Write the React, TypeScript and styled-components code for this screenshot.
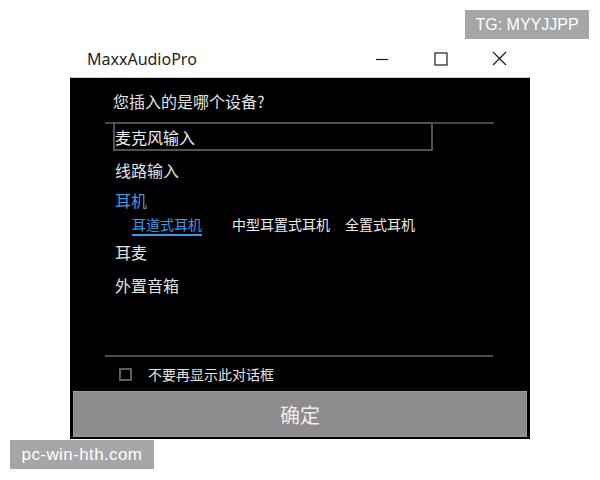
import React, { useState } from "react";
import styled, { createGlobalStyle } from "styled-components";

const GlobalStyle = createGlobalStyle`
  html, body {
    margin: 0;
    padding: 0;
    background: #ffffff;
  }
  body {
    font-family: "Noto Sans", "Noto Sans CJK SC", sans-serif;
  }
`;

const CJK = `"Noto Sans CJK SC", "Noto Sans", sans-serif`;

const Page = styled.div`
  position: relative;
  width: 600px;
  height: 480px;
  overflow: hidden;
  background: #ffffff;
`;

const Window = styled.div`
  margin: 40px 0 0 70px;
  width: 460px;
  display: flex;
  flex-direction: column;
`;

const TitleBar = styled.div`
  height: 37px;
  display: flex;
  align-items: center;
  background: #ffffff;
  border-bottom: 1px solid #c8c8c8;
`;

const Title = styled.div`
  flex: 1;
  padding-left: 17px;
  font-family: "Noto Sans", sans-serif;
  font-size: 16px;
  color: #1e1e1e;
  line-height: 1;
  padding-top: 1px;
`;

const Controls = styled.div`
  display: flex;
  height: 100%;
  margin-right: 1px;
`;

const ControlButton = styled.button`
  width: 59px;
  height: 100%;
  border: 0;
  padding: 0;
  background: transparent;
  display: flex;
  align-items: center;
  justify-content: center;
  color: #1e1e1e;
  cursor: default;
`;

const Panel = styled.div`
  height: 361px;
  background: #000000;
  display: flex;
  flex-direction: column;
  padding: 0 3px 2px 3px;
  box-sizing: border-box;
  color: #e4e4e4;
  font-family: ${CJK};
`;

const Question = styled.div`
  height: 44px;
  display: flex;
  align-items: center;
  padding-left: 40px;
  font-size: 16px;
  color: #e2e2e2;
  padding-top: 1px;
  box-sizing: border-box;
`;

const Options = styled.div`
  margin: 0 33px 0 32px;
  border-top: 2px solid #474747;
  display: flex;
  flex-direction: column;
`;

const SelectedBox = styled.div`
  margin: -2px 0 0 8px;
  width: 320px;
  height: 29px;
  box-sizing: border-box;
  border: 2px solid #525252;
  display: flex;
  align-items: center;
  font-size: 16px;
  color: #ececec;
  padding-left: 0;
`;

const Option = styled.div<{ $h: number; $blue?: boolean }>`
  height: ${(p) => p.$h}px;
  display: flex;
  align-items: center;
  padding-left: 10px;
  font-size: 16px;
  color: ${(p) => (p.$blue ? "#3d9ae0" : "#e2e2e2")};
`;

const SubRow = styled.div`
  height: 23px;
  display: flex;
  align-items: center;
  padding-left: 27px;
  font-size: 14px;
`;

const SubItem = styled.span<{ $active?: boolean; $gap: number }>`
  margin-right: ${(p) => p.$gap}px;
  color: ${(p) => (p.$active ? "#3d9ae0" : "#ececec")};
  text-decoration: ${(p) => (p.$active ? "underline" : "none")};
  text-decoration-thickness: 2px;
  text-underline-offset: 4px;
  text-decoration-color: #3d9ae0;
`;

const Spacer = styled.div`
  flex: 1;
`;

const FooterRule = styled.div`
  margin: 0 34px 0 32px;
  border-top: 2px solid #4e4e4e;
`;

const CheckRow = styled.label`
  height: 34px;
  display: flex;
  align-items: center;
  padding-left: 46px;
  gap: 16px;
  font-size: 14px;
  color: #e2e2e2;
  cursor: default;
`;

const CheckBox = styled.span<{ $on: boolean }>`
  width: 13px;
  height: 13px;
  box-sizing: border-box;
  border: 2px solid #5e5e5e;
  background: ${(p) => (p.$on ? "#5e5e5e" : "transparent")};
`;

const ConfirmButton = styled.button`
  height: 46px;
  width: 100%;
  border: 1px solid #9a9a9a;
  background: #8c8c8c;
  color: #ededed;
  font-family: ${CJK};
  font-size: 20px;
  padding: 0;
  cursor: default;
`;

const Badge = styled.div<{ $size: number }>`
  position: absolute;
  height: 29px;
  display: flex;
  align-items: center;
  justify-content: center;
  background: #a6a6a6;
  color: #ffffff;
  font-family: "Liberation Sans", Arial, sans-serif;
  font-size: ${(p) => p.$size}px;
`;

const TopBadge = styled(Badge)`
  top: 10px;
  left: 465px;
  width: 124px;
`;

const BottomBadge = styled(Badge)`
  top: 440px;
  left: 10px;
  width: 144px;
  letter-spacing: 0.4px;
`;

const MinimizeIcon = () => (
  <svg width="14" height="14" viewBox="0 0 14 14">
    <path d="M1 7.5h12" stroke="currentColor" strokeWidth="1.2" />
  </svg>
);

const MaximizeIcon = () => (
  <svg width="14" height="14" viewBox="0 0 14 14">
    <rect x="1" y="1" width="12" height="12" fill="none" stroke="currentColor" strokeWidth="1.2" />
  </svg>
);

const CloseIcon = () => (
  <svg width="15" height="15" viewBox="0 0 15 15">
    <path d="M1 1l13 13M14 1L1 14" stroke="currentColor" strokeWidth="1.2" />
  </svg>
);

export default function App() {
  const [dontShow, setDontShow] = useState(false);
  return (
    <>
      <GlobalStyle />
      <Page>
        <Window>
          <TitleBar>
            <Title>MaxxAudioPro</Title>
            <Controls>
              <ControlButton aria-label="minimize">
                <MinimizeIcon />
              </ControlButton>
              <ControlButton aria-label="maximize">
                <MaximizeIcon />
              </ControlButton>
              <ControlButton aria-label="close">
                <CloseIcon />
              </ControlButton>
            </Controls>
          </TitleBar>
          <Panel>
            <Question>您插入的是哪个设备?</Question>
            <Options>
              <SelectedBox>麦克风输入</SelectedBox>
              <Option $h={37}>线路输入</Option>
              <Option $h={24} $blue>
                耳机
              </Option>
              <SubRow>
                <SubItem $active $gap={30}>
                  耳道式耳机
                </SubItem>
                <SubItem $gap={15}>中型耳置式耳机</SubItem>
                <SubItem $gap={0}>全置式耳机</SubItem>
              </SubRow>
              <Option $h={34}>耳麦</Option>
              <Option $h={31}>外置音箱</Option>
            </Options>
            <Spacer />
            <FooterRule />
            <CheckRow onClick={() => setDontShow((v) => !v)}>
              <CheckBox $on={dontShow} />
              不要再显示此对话框
            </CheckRow>
            <ConfirmButton>确定</ConfirmButton>
          </Panel>
        </Window>
        <TopBadge $size={16}>TG: MYYJJPP</TopBadge>
        <BottomBadge $size={17}>pc-win-hth.com</BottomBadge>
      </Page>
    </>
  );
}
